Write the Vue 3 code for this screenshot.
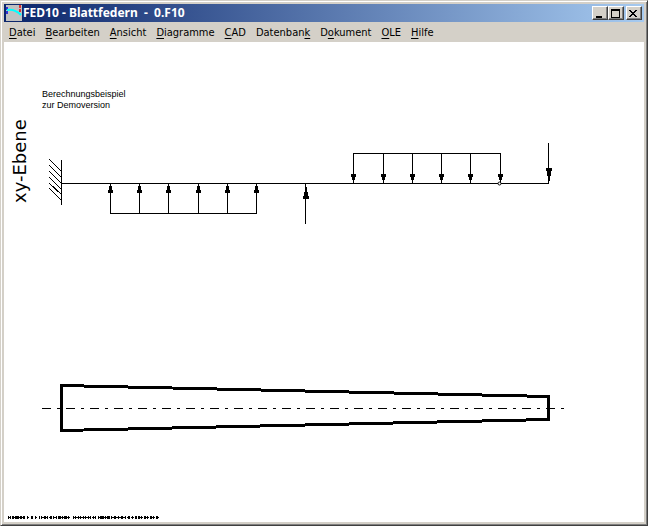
<template>
  <div class="window">
    <header class="title-bar">
      <svg class="app-icon" viewBox="0 0 16 16" aria-hidden="true">
        <rect width="16" height="16" fill="#c0c0c0" />
        <path d="M1 2v7" stroke="#3030d0" stroke-width="2" stroke-dasharray="3 1" />
        <path d="M14 0v7" stroke="#e03030" stroke-width="2" stroke-dasharray="3 1" />
        <path d="M1 5C7 4 11 6 15 10" fill="none" stroke="#00ffff" stroke-width="2" />
      </svg>
      <h1 class="title">FED10 - Blattfedern&nbsp; -&nbsp; 0.F10</h1>
      <div class="win-buttons">
        <button class="win-btn" type="button" aria-label="Minimieren">
          <svg viewBox="0 0 12 10"><path d="M3 8h6v2H3z" /></svg>
        </button>
        <button class="win-btn" type="button" aria-label="Maximieren">
          <svg viewBox="0 0 12 10"><path fill-rule="evenodd" d="M2 1h9v9H2zM3 3v6h7V3z" /></svg>
        </button>
        <button class="win-btn close" type="button" aria-label="Schließen">
          <svg viewBox="0 0 12 10">
            <path d="M2 2h2v1h1v1h2V3h1V2h2v1H9v1H8v1H7v1h1v1h1v1h1v1H8V8H7V7H5v1H4v1H2V8h1V7h1V6h1V5H4V4H3V3H2z" />
          </svg>
        </button>
      </div>
    </header>

    <nav class="menu-bar">
      <button v-for="m in menus" :key="m.pre + m.key + m.post" class="menu-item" type="button">
        {{ m.pre }}<u>{{ m.key }}</u>{{ m.post }}
      </button>
    </nav>

    <main class="sheet">
      <svg class="drawing" viewBox="0 0 640 480" preserveAspectRatio="xMinYMin meet">
        <text class="note" x="38" y="55">Berechnungsbeispiel</text>
        <text class="note" x="38" y="66">zur Demoversion</text>
        <text class="plane" transform="translate(22 161) rotate(-90)">xy-Ebene</text>

        <!-- Einspannung -->
        <g class="thin">
          <path v-for="h in hatch" :key="h[0]" :d="`M45.5 ${h[0]}.5L57.5 ${h[1]}.5`" />
          <path d="M57.5 118v45" />
        </g>

        <!-- Balken und Streckenlasten -->
        <path class="thin" d="M57 141.5h488M106 171.5h147M349 111.5h147" />
        <g v-for="x in loadsUp" :key="'u' + x" :transform="`translate(${x} 142)`">
          <path class="thin" d="M.5 0v30" />
          <path d="M0 1h1v1h1v4h1v3h-5v-3h1v-4h1z" />
        </g>
        <g v-for="x in loadsDown" :key="'d' + x" :transform="`translate(${x} 141)`">
          <path class="thin" d="M.5 -30v30" />
          <path d="M-1 -9h4v3h-1v3h-1v3h-1v-3h-1v-3h-1v-3z" />
        </g>

        <!-- Einzelkräfte -->
        <path class="thin" d="M301.5 142v40M544.5 101v41" />
        <path d="M301 142h1v3h1v5h1v4h1v3h-6v-3h1v-4h1v-5h0z" />
        <path d="M542 126h6v3h-1v5h-1v5h-2v-5h-1v-5h-1z" />
        <circle class="joint" cx="495.5" cy="141.5" r="1.5" />

        <!-- Draufsicht der Feder -->
        <path class="outline" d="M57.5 343.5L544.5 354.5V377.5L57.5 388.5Z" />
        <path class="axis" d="M38 366.5h523" />

        <g v-for="b in footMarks" :key="b[0]" class="foot">
          <path :d="`M${b[0]} 475.5h${b[1]}`" :stroke-dasharray="b[2]" />
          <path class="core" :d="`M${b[0]} 475.5h${b[1]}`" :stroke-dasharray="b[3]" />
        </g>
      </svg>
    </main>
  </div>
</template>

<script setup>
const menus = [
  { pre: '', key: 'D', post: 'atei' },
  { pre: '', key: 'B', post: 'earbeiten' },
  { pre: '', key: 'A', post: 'nsicht' },
  { pre: '', key: 'D', post: 'iagramme' },
  { pre: '', key: 'C', post: 'AD' },
  { pre: 'Datenban', key: 'k', post: '' },
  { pre: 'D', key: 'o', post: 'kument' },
  { pre: '', key: 'O', post: 'LE' },
  { pre: '', key: 'H', post: 'ilfe' }
]

const hatch = [[117, 129], [123, 135], [129, 141], [135, 147], [141, 152], [146, 158]]
const loadsUp = [106, 135, 164, 194, 223, 252]
const loadsDown = [349, 379, 408, 437, 466, 496]

// start, length, dashes of the full stroke, dashes of the middle line
const footMarks = [
  [4, 3, '1 1', '3 0'],
  [8, 13, '2 1 4 1', '13 0'],
  [23, 13, '1 3 2 2', '2 2'],
  [37, 16, '1 2 2 1', '3 1'],
  [54, 12, '3 1 1 1', '12 0'],
  [69, 23, '1 1 1 2', '2 1 4 1'],
  [94, 12, '1 1 4 1', '12 0'],
  [107, 26, '1 2 2 2', '3 1'],
  [134, 21, '2 1 1 2', '5 1']
]
</script>

<style>
body {
  margin: 0;
}
</style>

<style scoped>
.window {
  display: flex;
  flex-direction: column;
  box-sizing: border-box;
  min-height: 100vh;
  padding: 3px;
  background: #d4d0c8;
  border: 1px solid;
  border-color: #d4d0c8 #404040 #404040 #d4d0c8;
  box-shadow: inset 1px 1px #fff, inset -1px -1px #808080;
  font-family: "DejaVu Sans Condensed", "DejaVu Sans", sans-serif;
  font-size: 11px;
  color: #000;
}

/* Titelleiste */
.title-bar {
  display: flex;
  align-items: center;
  height: 18px;
  padding: 0 2px;
  background: linear-gradient(90deg, #0a246a, #a6caf0);
}
.app-icon {
  flex: none;
  width: 16px;
  height: 16px;
}
.title {
  flex: 1;
  margin: 0 0 0 1px;
  color: #fff;
  font-family: "Noto Sans", sans-serif;
  font-size: 12px;
  font-weight: bold;
  line-height: 18px;
  white-space: nowrap;
}
.win-buttons {
  display: flex;
}
.win-btn {
  width: 16px;
  height: 14px;
  padding: 0;
  background: #d4d0c8;
  border: 1px solid;
  border-color: #fff #404040 #404040 #fff;
  box-shadow: inset -1px -1px #808080;
}
.win-btn svg {
  display: block;
  width: 12px;
  height: 10px;
  shape-rendering: crispEdges;
}
.win-btn.close {
  margin-left: 2px;
}

/* Menü */
.menu-bar {
  display: flex;
  height: 20px;
}
.menu-item {
  padding: 1px 5px 0;
  border: none;
  background: transparent;
  color: inherit;
  font: inherit;
  line-height: 20px;
}
.menu-item u {
  text-underline-offset: 2px;
}

/* Zeichenfläche */
.sheet {
  flex: 1;
  background: #fff;
}
.drawing {
  display: block;
  width: 100%;
  shape-rendering: crispEdges;
}
.note {
  font-family: "Liberation Sans", Arial, sans-serif;
  font-size: 9px;
}
.plane {
  font-family: "DejaVu Sans", sans-serif;
  font-size: 18px;
}
.thin {
  fill: none;
  stroke: #000;
  stroke-width: 1;
}
.joint {
  fill: #fff;
  stroke: #000;
  shape-rendering: auto;
}
.outline {
  fill: none;
  stroke: #000;
  stroke-width: 3;
}
.axis {
  stroke: #000;
  stroke-dasharray: 9 6 3 6;
}
.foot {
  stroke: #000;
  stroke-width: 3;
}
.foot .core {
  stroke-width: 1;
}
</style>
